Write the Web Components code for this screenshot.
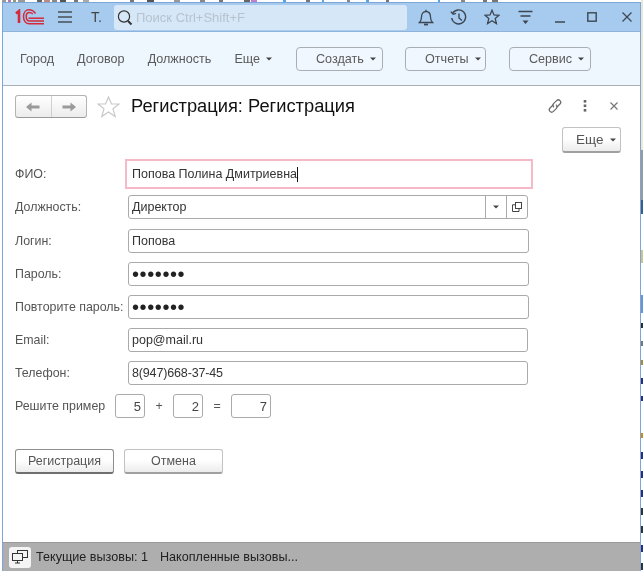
<!DOCTYPE html>
<html lang="ru"><head><meta charset="utf-8"><title>Регистрация</title>
<style>
html,body{margin:0;padding:0;width:643px;height:571px;overflow:hidden;background:#fff;font-family:"Liberation Sans",Arial,sans-serif}
</style></head><body>
<app-desktop>
<title-bar></title-bar>
<nav-bar>
  <nav-link style="margin-left:18px">Город</nav-link>
  <nav-link style="margin-left:23px">Договор</nav-link>
  <nav-link style="margin-left:23px">Должность</nav-link>
  <nav-link style="margin-left:23px" arrow>Еще</nav-link>
  <nav-button style="margin-left:24px;width:87px;padding-left:19px">Создать</nav-button>
  <nav-button style="margin-left:22px;width:81px;padding-left:19px">Отчеты</nav-button>
  <nav-button style="margin-left:23px;width:82px;padding-left:19px">Сервис</nav-button>
</nav-bar>
<form-head title-text="Регистрация: Регистрация"></form-head>
<reg-form>
  <div class="more"><push-button arrow style="width:59px;height:26px;justify-content:flex-start;padding-left:13px;gap:7px;font-size:13.5px">Еще</push-button></div>
  <form-row label="ФИО:" style="height:30px;margin-top:6px"><text-field active style="width:408px;height:30px;margin-left:-3px" value="Попова Полина Дмитриевна"></text-field></form-row>
  <form-row label="Должность:" style="margin-top:6px"><select-field style="width:400px" value="Директор"></select-field></form-row>
  <form-row label="Логин:" style="margin-top:10px"><text-field style="width:401px" value="Попова"></text-field></form-row>
  <form-row label="Пароль:" style="margin-top:9px"><text-field secret style="width:401px" value="•••••••"></text-field></form-row>
  <form-row label="Повторите пароль:" style="margin-top:9px"><text-field secret style="width:401px" value="•••••••"></text-field></form-row>
  <form-row label="Email:" style="margin-top:9px"><text-field style="width:400px" value="pop@mail.ru"></text-field></form-row>
  <form-row label="Телефон:" style="margin-top:9px"><text-field style="width:400px;letter-spacing:-.15px" value="8(947)668-37-45"></text-field></form-row>
  <captcha-row></captcha-row>
  <div class="actions">
    <push-button dark style="width:99px;height:25px">Регистрация</push-button>
    <push-button style="width:99px;height:25px">Отмена</push-button>
  </div>
</reg-form>
<status-bar></status-bar>
</app-desktop>
<script>
function def(name,css,html){
  customElements.define(name,class extends HTMLElement{
    connectedCallback(){
      if(this.shadowRoot)return;
      const r=this.attachShadow({mode:'open'});
      r.innerHTML='<style>'+css+'</style>'+(typeof html==='function'?html(this):html);
    }
  });
}
const caret='<svg width="6" height="4" viewBox="0 0 6 4" style="flex:none"><path d="M0 0.5H6L3 3.5Z" fill="#444"/></svg>';
const rightMarks=[[0,35,'#e9e6da'],[35,115,'#efeacf'],[150,50,'#9a9a9a'],[200,14,'#3d5f86'],[250,13,'#cfc48e'],[295,18,'#6a95d0'],[323,5,'#2e2e2e'],[341,5,'#777'],[360,5,'#a98a3a'],[378,6,'#2b2f7a'],[396,5,'#2b2f7a'],[433,5,'#c98a20'],[452,7,'#2b2f7a'],[471,7,'#2b2f7a'],[490,7,'#2b2f7a'],[508,7,'#333'],[526,7,'#333'],[545,7,'#2b2f7a'],[563,7,'#333']];
const topMarks=[[2,4,'#999'],[8,3,'#b57ab5'],[13,3,'#8f9c78'],[18,7,'#999'],[37,5,'#666'],[44,6,'#c08a78'],[52,5,'#888'],[60,6,'#555'],[74,4,'#777'],[83,6,'#aaa'],[130,4,'#777'],[147,7,'#555'],[174,6,'#999'],[200,5,'#888'],[219,4,'#777'],[244,6,'#666'],[251,3,'#c080d0'],[254,3,'#c080d0'],[283,3,'#5aa4e0'],[306,4,'#777'],[322,2,'#5aa4e0'],[347,3,'#888'],[366,3,'#5aa4e0'],[386,3,'#777'],[438,2,'#5aa4e0'],[461,4,'#888'],[483,4,'#777'],[492,6,'#777']];
const bg=[...rightMarks.map(([y,h,c])=>`linear-gradient(${c} 0 0) 641px ${y}px/2px ${h}px no-repeat`),...topMarks.map(([x,w,c])=>`linear-gradient(${c} 0 0) ${x}px 0/${w}px 2px no-repeat`),'#fff'].join(',');
def('app-desktop',`
:host{display:block;width:643px;height:571px;box-sizing:border-box;padding:2px 2px 0 2px;position:relative;background:${bg}}
:host::before{content:"";position:absolute;left:2px;top:2px;bottom:0;width:1px;background:#7da6d8;z-index:2}
:host::after{content:"";position:absolute;left:640px;top:2px;bottom:0;width:1px;background:#7da6d8;z-index:2}
.w{width:638px;height:569px;display:flex;flex-direction:column;overflow:hidden;background:#fff;filter:blur(.3px)}
`,`<div class="w"><slot></slot></div>`);

def('title-bar',`
:host{display:flex;align-items:center;height:30px;flex:none;background:#a6cbef;color:#444;box-sizing:border-box;border-top:1px solid #7da6d8;border-bottom:1px solid #8fb4dc;position:relative}
.logo{margin-left:13px;flex:none}
.burger{margin-left:12px;flex:none}
.t{margin-left:18px;width:23px;font-size:14px;color:#444;flex:none}
.search{width:293px;height:25px;background:#d6e7f8;border-radius:3px;display:flex;align-items:center;flex:none;box-sizing:border-box;padding-left:3px}
.search span{margin-left:3px;font-size:13px;color:#b7c3ce;white-space:nowrap}
.i{flex:none;display:block}
`,`
<svg class="logo" width="30" height="16" viewBox="0 0 30 16" fill="none" stroke="#d42a3a">
 <path d="M1 4.5L4 2V14" stroke-width="2.6"/>
 <path d="M20.5 4.5C18.5 1.8 16 .8 14 .8C10.5 .8 8.5 4 8.5 7.5C8.5 12 11 14.8 14.5 14.8H29" stroke-width="1.5"/>
 <path d="M17.8 5C16.8 4 15.5 3.6 14.3 3.6C12.2 3.6 11.2 5.5 11.2 7.5C11.2 10 12.6 12 14.8 12H29" stroke-width="1.5"/>
 <path d="M13.5 9.2H29" stroke-width="1.5"/>
</svg>
<svg class="burger" width="16" height="14" viewBox="0 0 16 14" stroke="#4a4f55" stroke-width="1.5"><path d="M1 2H15M1 7H15M1 12H15"/></svg>
<span class="t">Т.</span>
<div class="search">
 <svg class="i" width="16" height="17" viewBox="0 0 16 17" fill="none" stroke="#333"><circle cx="7" cy="7.5" r="5.6" stroke-width="1.2"/><path d="M11 12L14.5 15.5" stroke-width="2"/></svg>
 <span>Поиск Ctrl+Shift+F</span>
</div>
<svg class="i" style="margin-left:11px" width="16" height="17" viewBox="0 0 16 17" fill="none" stroke="#3d4650" stroke-width="1.3"><path d="M1.5 13.5C3 12 3.5 10.5 3.5 8C3.5 4.5 5.5 2.5 8 2.5C10.5 2.5 12.5 4.5 12.5 8C12.5 10.5 13 12 14.5 13.5Z"/><path d="M6 15.5H10" stroke-width="1.8"/><path d="M8 .8V2.4"/></svg>
<svg class="i" style="margin-left:16px" width="17" height="17" viewBox="0 0 17 17" fill="none" stroke="#3d4650" stroke-width="1.4"><path d="M2.5 4.5A7 7 0 1 1 1.7 9"/><path d="M.8 2.6L3.2 5.3L6 4.4"/><path d="M9 4.5V9L12 11.5"/></svg>
<svg class="i" style="margin-left:17px" width="16" height="16" viewBox="0 0 16 16" fill="none" stroke="#3d4650" stroke-width="1.3"><path d="M8 1.2L10 5.9L15 6.3L11.2 9.5L12.4 14.5L8 11.8L3.6 14.5L4.8 9.5L1 6.3L6 5.9Z"/></svg>
<svg class="i" style="margin-left:18px" width="15" height="15" viewBox="0 0 15 15" fill="none" stroke="#3d4650" stroke-width="1.3"><path d="M.5 1.5H14.5M2.5 6H12.5"/><path d="M4.5 10.5H10.5L7.5 14Z" fill="#3d4650" stroke="none"/></svg>
<svg class="i" style="margin-left:22px;margin-top:10px" width="10" height="4" viewBox="0 0 10 4" stroke="#3d4650" stroke-width="1.5"><path d="M0 2H10"/></svg>
<svg class="i" style="margin-left:22px" width="10" height="10" viewBox="0 0 10 10" fill="none" stroke="#3d4650" stroke-width="1.4"><rect x=".8" y=".8" width="8.4" height="8.4"/></svg>
<svg class="i" style="margin-left:25px" width="10" height="10" viewBox="0 0 10 10" fill="none" stroke="#3d4650" stroke-width="1.2"><path d="M.5 .5L9.5 9.5M9.5 .5L.5 9.5"/></svg>
`);

def('nav-bar',`:host{display:flex;align-items:center;height:53px;flex:none;background:#eef6fe;border-bottom:1px solid #a9b0b8}`,`<slot></slot>`);
def('nav-link',`:host{display:flex;align-items:center;gap:6px;font-size:12.6px;color:#5a5a5a;white-space:nowrap;flex:none}`,
 el=>`<slot></slot>${el.hasAttribute('arrow')?caret:''}`);
def('nav-button',`:host{display:flex;align-items:center;gap:6px;height:24px;box-sizing:border-box;border:1px solid #a9aeb3;border-radius:4px;font-size:12.6px;color:#5a5a5a;white-space:nowrap;flex:none;background:#f1f7fe}`,
 `<slot></slot>${caret}`);

def('form-head',`
:host{display:flex;align-items:center;height:41px;flex:none;box-sizing:border-box;padding-left:13px;background:#fff;position:relative}
.nav{display:flex;width:72px;height:23px;box-sizing:border-box;border:1px solid #b4b4b4;border-bottom-color:#9a9a9a;border-radius:3px;background:linear-gradient(#fff,#ececec);flex:none}
.nav div{flex:1;display:flex;align-items:center;justify-content:center}
.nav div+div{border-left:1px solid #cfcfcf}
.star{margin-left:10px;flex:none}
h1{font:400 18.3px "Liberation Sans",Arial,sans-serif;margin:0 0 1px 11px;color:#111;white-space:nowrap;flex:none}
.tools{margin-left:auto;display:flex;align-items:center;margin-right:22px;margin-bottom:2px;flex:none}
`,el=>`
<div class="nav"><div><svg width="14" height="10" viewBox="0 0 14 10" fill="#9a9a9a"><path d="M0 5L5.5 .5V3.5H13.5V6.5H5.5V9.5Z"/></svg></div><div><svg width="14" height="10" viewBox="0 0 14 10" fill="#9a9a9a"><path d="M14 5L8.5 .5V3.5H.5V6.5H8.5V9.5Z"/></svg></div></div>
<svg class="star" width="23" height="22" viewBox="0 0 23 22" fill="none" stroke="#c9c9c9" stroke-width="1.2"><path d="M11.5 1L14.5 8H22L16 12.8L18.2 20.5L11.5 16L4.8 20.5L7 12.8L1 8H8.5Z"/></svg>
<h1>${el.getAttribute('title-text')}</h1>
<div class="tools">
<svg width="16" height="16" viewBox="0 0 16 16" fill="none" stroke="#6b6b6b" stroke-width="1.2"><path d="M6.5 6.5L3 10a2.4 2.4 0 0 0 3.4 3.4L9.5 10.3a2.4 2.4 0 0 0-.5-3.5"/><path d="M9.5 9.5L13 6a2.4 2.4 0 0 0-3.4-3.4L6.5 5.7a2.4 2.4 0 0 0 .5 3.5"/></svg>
<svg style="margin-left:20px" width="4" height="12" viewBox="0 0 4 12" fill="#666"><rect x=".7" y="0" width="2.6" height="2.6"/><rect x=".7" y="4.5" width="2.6" height="2.6"/><rect x=".7" y="9" width="2.6" height="2.6"/></svg>
<svg style="margin-left:23px" width="8" height="8" viewBox="0 0 8 8" stroke="#777" stroke-width="1.2"><path d="M.5 .5L7.5 7.5M7.5 .5L.5 7.5"/></svg>
</div>`);

def('reg-form',`
:host{display:block;flex:1;box-sizing:border-box;padding:0 0 0 13px;background:#fff}
::slotted(.more){display:flex;justify-content:flex-end;padding-right:19px}
::slotted(.actions){display:flex;gap:10px;margin-top:31px}
`,`<slot></slot>`);

def('form-row',`
:host{display:flex;align-items:center;height:24px;font-size:12.4px;color:#555;white-space:nowrap}
.l{width:113px;flex:none}
`,el=>`<span class="l">${el.getAttribute('label')}</span><slot></slot>`);

def('text-field',`
:host{display:flex;align-items:center;height:24px;box-sizing:border-box;border:1px solid #aaa;border-radius:3px;padding-left:3px;font-size:12.5px;color:#333;background:#fff;flex:none;white-space:nowrap}
:host([active]){border:2px solid #f6b9c8;border-radius:0;padding-left:5px}
:host([secret]){font-size:20px;letter-spacing:.6px;line-height:1;color:#222}
i{display:inline-block;width:1px;height:15px;background:#111}
`,el=>`<span>${el.getAttribute('value')}</span>${el.hasAttribute('active')?'<i></i>':''}`);

def('select-field',`
:host{display:flex;align-items:stretch;height:24px;box-sizing:border-box;border:1px solid #aaa;border-radius:3px;font-size:12.5px;color:#333;flex:none;white-space:nowrap}
.v{flex:1;display:flex;align-items:center;padding-left:3px}
.b{display:flex;align-items:center;justify-content:center;width:20px;border-left:1px solid #aaa}
`,el=>`<span class="v">${el.getAttribute('value')}</span><span class="b">${caret}</span><span class="b"><svg width="10" height="10" viewBox="0 0 10 10" fill="none" stroke="#444"><rect x="3.5" y=".5" width="6" height="6"/><path d="M3.5 2.8H.5V9.5H7V6.5"/></svg></span>`);

def('captcha-row',`
:host{display:flex;align-items:center;height:24px;margin-top:9px;font-size:12.4px;color:#555;white-space:nowrap}
.b{height:24px;box-sizing:border-box;border:1px solid #aaa;border-radius:3px;display:flex;align-items:center;justify-content:flex-end;padding-right:3px;font-size:13px;color:#444;flex:none}
.o{width:28px;text-align:center;flex:none}
`,`<span style="width:100px;flex:none">Решите пример</span><span class="b" style="width:30px">5</span><span class="o">+</span><span class="b" style="width:30px">2</span><span class="o">=</span><span class="b" style="width:40px">7</span>`);

def('push-button',`
:host{display:flex;align-items:center;justify-content:center;gap:6px;box-sizing:border-box;border:1px solid #c2c2c2;border-bottom:2px solid #a0a0a0;border-radius:3px;background:linear-gradient(#fff 45%,#ececec);font-size:12.5px;color:#555;flex:none;white-space:nowrap}
:host([dark]){border-color:#8f8f8f;border-bottom-color:#6f6f6f}
`,el=>`<slot></slot>${el.hasAttribute('arrow')?caret:''}`);

def('status-bar',`
:host{display:flex;align-items:center;height:28px;flex:none;background:#aeaeae;border-top:1px solid #999;color:#222;font-size:12.6px;white-space:nowrap}
.ic{width:22px;height:21px;margin-left:7px;background:#f4f4f4;border-radius:3px;display:flex;align-items:center;justify-content:center;flex:none}
.a{margin-left:5px}.c{margin-left:12px}
`,`<span class="ic"><svg width="16" height="14" viewBox="0 0 16 14" fill="none" stroke="#333"><rect x="5.5" y=".5" width="10" height="7"/><rect x=".5" y="3.5" width="10" height="7" fill="#f4f4f4"/><path d="M5.5 10.5V13M3 13H8"/></svg></span><span class="a">Текущие вызовы: 1</span><span class="c">Накопленные вызовы...</span>`);
</script>
</body></html>
